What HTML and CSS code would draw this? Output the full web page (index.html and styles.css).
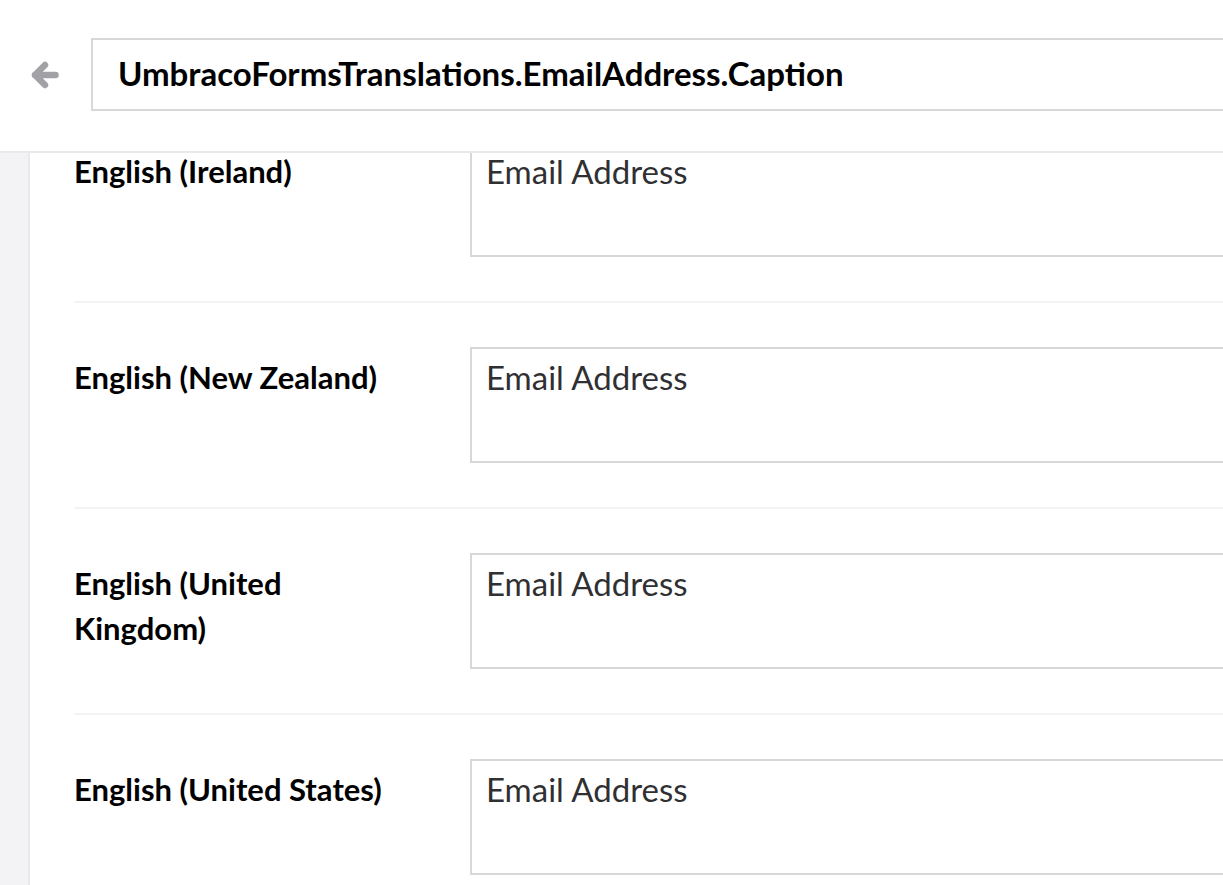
FILE: index.html
```html
<!DOCTYPE html>
<html lang="en">
<head>
<meta charset="utf-8">
<title>Translation editor</title>
<link rel="stylesheet" href="styles.css">
</head>
<body>
<div class="app">
  <header class="header">
    <button class="back" type="button" aria-label="Back">
      <svg viewBox="0 0 28 28" width="28" height="28" aria-hidden="true">
        <path d="M4 14 H24.5 M14 4 L4 14 L14 24" fill="none" stroke="currentColor" stroke-width="6.5" stroke-linecap="round" stroke-linejoin="round"/>
      </svg>
    </button>
    <div class="name-input">UmbracoFormsTranslations.EmailAddress.Caption</div>
  </header>
  <div class="main">
    <aside class="sidebar"></aside>
    <section class="content">
      <div class="list">
        <div class="row">
          <div class="label">English (Ireland)</div>
          <div class="field">Email Address</div>
        </div>
        <div class="row">
          <div class="label">English (New Zealand)</div>
          <div class="field">Email Address</div>
        </div>
        <div class="row">
          <div class="label">English (United Kingdom)</div>
          <div class="field">Email Address</div>
        </div>
        <div class="row">
          <div class="label">English (United States)</div>
          <div class="field">Email Address</div>
        </div>
      </div>
    </section>
  </div>
</div>
</body>
</html>
```
FILE: styles.css
```css
* { box-sizing: border-box; }
html, body {
  margin: 0;
  height: 100%;
  overflow: hidden;
  background: #ffffff;
}
body {
  font-family: Lato, "Open Sans", sans-serif;
  color: #000;
}
.app {
  display: flex;
  flex-direction: column;
  height: 100%;
}
.header {
  flex: 0 0 auto;
  height: 153px;
  display: flex;
  align-items: center;
  padding: 0 0 2px 31px;
  border-bottom: 2px solid #e9e9eb;
  background: #fff;
  position: relative;
  z-index: 2;
}
.back {
  width: 28px;
  height: 28px;
  padding: 0;
  margin: 0 32px 0 0;
  border: 0;
  background: none;
  color: #a2a1a6;
  display: flex;
}
.name-input {
  flex: 1 0 auto;
  margin-right: -60px;
  height: 73px;
  border: 2px solid #d8d7d9;
  display: flex;
  align-items: center;
  padding: 0 0 4px 25px;
  font-size: 33px;
  font-weight: 700;
  color: #000;
  white-space: nowrap;
}
.main {
  flex: 1 1 auto;
  display: flex;
  min-height: 0;
}
.sidebar {
  flex: 0 0 30px;
  background: #f3f3f5;
  border-right: 2px solid #e9e9eb;
}
.content {
  flex: 1 1 auto;
  overflow: hidden;
  padding-left: 44px;
}
.list {
  margin-top: -56px;
  margin-right: -60px;
}
.row {
  display: grid;
  grid-template-columns: 326px 1fr;
  column-gap: 70px;
  padding: 44px 0;
  border-bottom: 2px solid #f3f3f5;
}
.label {
  padding: 8px 0 0 0;
  font-size: 31px;
  line-height: 45px;
  font-weight: 700;
  color: #000;
}
.field {
  height: 116px;
  border: 2px solid #d8d7d9;
  padding: 6px 14px;
  font-size: 33px;
  line-height: 45px;
  color: #303033;
}
```
